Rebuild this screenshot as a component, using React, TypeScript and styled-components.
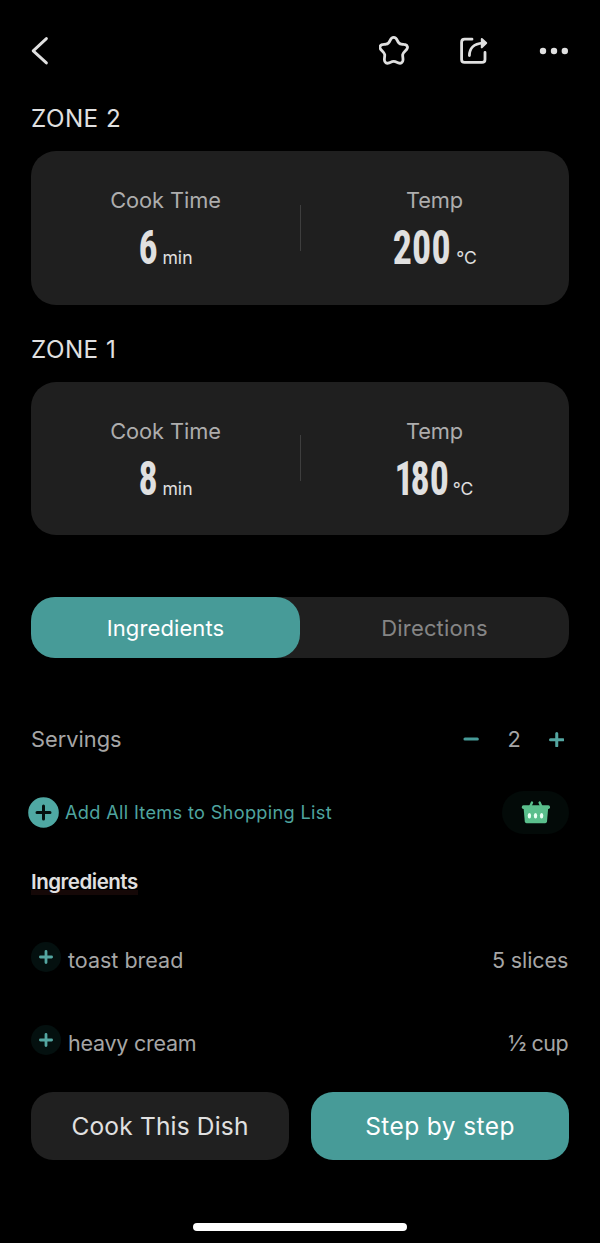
import React from 'react';
import styled, { createGlobalStyle } from 'styled-components';

const TEAL = '#479b98';
const PANEL = '#1f1f1f';
const LIGHT = '#e0e0e0';
const MUTED = '#a6a6a6';

const GlobalStyle = createGlobalStyle`
  * { box-sizing: border-box; }
  body { margin: 0; background: #000; }
  button { border: 0; padding: 0; background: none; font: inherit; color: inherit; }
`;

const Screen = styled.main`
  display: flex;
  flex-direction: column;
  width: 600px;
  height: 1243px;
  padding: 0 31px;
  overflow: hidden;
  background: #000;
  color: ${LIGHT};
  font-family: Inter, sans-serif;
  white-space: nowrap;
`;

const Header = styled.header`
  display: flex;
  flex: none;
  align-items: center;
  height: 102px;
  color: ${LIGHT};
`;

const HeaderActions = styled.div`
  display: flex;
  align-items: center;
  gap: 48px;
  margin-left: auto;
`;

const IconButton = styled.button`
  display: flex;
  flex: none;
`;

const ZoneTitle = styled.h2<{ $gap?: number }>`
  flex: none;
  margin: ${p => p.$gap ?? 0}px 0 16px;
  font-size: 24.2px;
  font-weight: 400;
  line-height: 33px;
  letter-spacing: 0.5px;
`;

const ZoneCard = styled.section`
  display: flex;
  flex: none;
  align-items: center;
  height: 153.5px;
  border-radius: 25px;
  background: ${PANEL};
`;

const Metric = styled.div`
  display: flex;
  flex-direction: column;
  align-items: center;
  align-self: stretch;
  width: 269px;
  padding-top: 35.4px;
`;

const MetricLabel = styled.span`
  font-size: 21.8px;
  line-height: 28px;
  letter-spacing: -0.08px;
  color: #adadad;
`;

const MetricReading = styled.div`
  display: flex;
  align-items: baseline;
  gap: 4px;
  margin-top: 16px;
`;

const MetricValue = styled.span<{ $width: number; $shift: number; $lead?: number }>`
  display: block;
  width: ${p => p.$width}px;
  text-indent: ${p => p.$shift}px;
  font-family: 'Roboto Condensed', Roboto, sans-serif;
  font-size: 48px;
  font-weight: 700;
  line-height: 36px;
  letter-spacing: 0.3px;
  transform: scaleX(0.79);
  transform-origin: left;

  &::first-letter { letter-spacing: ${p => p.$lead ?? 0.3}px; }
`;

const MetricUnit = styled.span<{ $size: number }>`
  font-size: ${p => p.$size}px;
  line-height: 20px;
`;

const CardDivider = styled.div`
  flex: none;
  width: 1px;
  height: 46px;
  margin-right: -1px;
  background: #3e3e3e;
`;

const Tabs = styled.div`
  display: flex;
  flex: none;
  height: 61.4px;
  margin-top: 62px;
  border-radius: 24px;
  background: ${PANEL};
`;

const Tab = styled.button<{ $active?: boolean }>`
  flex: 1;
  border-radius: 24px;
  background: ${p => (p.$active ? TEAL : 'transparent')};
  color: ${p => (p.$active ? '#fff' : '#858585')};
  font-size: 22px;
  letter-spacing: ${p => (p.$active ? 0.1 : 0.15)}px;
`;

const ServingsRow = styled.div`
  display: flex;
  flex: none;
  align-items: center;
  height: 40px;
  margin-top: 60.8px;
  font-size: 21.8px;
  color: ${MUTED};
`;

const Stepper = styled.div`
  display: flex;
  align-items: center;
  gap: 28px;
  margin-left: auto;
  padding-right: 4.7px;

  svg { margin-top: 0.6px; }
`;

const ShoppingRow = styled.div`
  display: flex;
  flex: none;
  align-items: center;
  height: 43px;
  margin: 31.6px 0 0 -3.5px;
`;

const AddAllButton = styled.button`
  display: flex;
  align-items: center;
  gap: 6.5px;
  color: #4fa49f;
  font-size: 18.2px;
  letter-spacing: 0.31px;
`;

const BasketPill = styled.button`
  display: flex;
  align-items: center;
  justify-content: center;
  width: 67.5px;
  height: 43px;
  margin-left: auto;
  padding-left: 1px;
  border-radius: 22px;
  background: #030a08;
`;

const ListTitle = styled.h3`
  flex: none;
  align-self: flex-start;
  margin: 33px 0 0;
  background: linear-gradient(#150807, #150807) 0 23px / 100% 5px no-repeat;
  font-size: 20.5px;
  font-weight: 600;
  line-height: 30px;
  letter-spacing: -0.48px;
`;

const IngredientRow = styled.div<{ $gap: number }>`
  display: flex;
  flex: none;
  height: 30px;
  margin-top: ${p => p.$gap}px;
  padding-right: 0.8px;
  font-size: 21.5px;
  line-height: 30px;
  color: ${MUTED};
`;

const AddBadge = styled.button`
  display: flex;
  flex: none;
  align-items: center;
  justify-content: center;
  width: 30px;
  height: 30px;
  margin: -3px 7px 0 0;
  border-radius: 50%;
  background: #04100f;
`;

const RowText = styled.span<{ $tracking: number; $end?: boolean }>`
  margin-left: ${p => (p.$end ? 'auto' : 0)};
  letter-spacing: ${p => p.$tracking}px;
`;

const ActionBar = styled.div`
  display: flex;
  flex: none;
  gap: 22px;
  height: 68px;
  margin-top: 33.9px;
`;

const ActionButton = styled.button<{ $primary?: boolean }>`
  flex: 1;
  padding-top: 0.4px;
  border-radius: 22px;
  background: ${p => (p.$primary ? TEAL : '#202020')};
  color: ${p => (p.$primary ? '#fff' : LIGHT)};
  font-size: 24.5px;
  letter-spacing: ${p => (p.$primary ? 0.4 : 0.18)}px;
`;

const HomeIndicator = styled.div`
  flex: none;
  align-self: center;
  width: 214px;
  height: 7.5px;
  margin-top: 63px;
  border-radius: 4px;
  background: #fff;
`;

const BackIcon = () => (
  <svg width="18" height="30" viewBox="31 36 18 30" fill="none" stroke="currentColor" strokeWidth="2.9" strokeLinecap="round" strokeLinejoin="round">
    <path d="M46.4 38.6 33.2 50.9l13.2 12" />
  </svg>
);

const StarIcon = () => (
  <svg width="32" height="32" viewBox="379 35 32 32" fill="none" stroke="currentColor" strokeWidth="2.8" strokeLinejoin="round">
    <path d="M393.7 37.4C395.6 37.4 396.6 38.8 397.4 40.6C398.4 42.9 399 43.8 401.3 44.1C403 44.4 404 44.3 405.2 44.6C407.6 45.3 408.2 47.6 406.6 49.5C405.2 51.1 403 52.8 402.7 54.6C402.5 56 403.1 58 403 60C402.9 62.6 400.8 63.9 398.4 62.9C396.8 62.2 395.5 61.3 393.7 61.3C391.9 61.3 390.6 62.2 389 62.9C386.6 63.9 384.5 62.6 384.4 60C384.3 58 384.9 56 384.7 54.6C384.4 52.8 382.2 51.1 380.8 49.5C379.2 47.6 379.8 45.3 382.2 44.6C383.4 44.3 384.4 44.4 386.1 44.1C388.4 43.8 389 42.9 390 40.6C390.8 38.8 391.8 37.4 393.7 37.4Z" />
  </svg>
);

const ShareIcon = () => (
  <svg width="32" height="32" viewBox="458.8 35 32 32" fill="none" stroke="currentColor" strokeWidth="2.8" strokeLinecap="round" strokeLinejoin="round">
    <path d="M471.8 39.2H464.4q-3 0-3 3V59.4q0 3 3 3h17.4q3 0 3-3V52.4" />
    <path d="M469.2 55.6C469.2 48.6 473.4 43.6 482.5 43.2" />
    <path d="M481.6 39 486 43.1 481.6 47.4Z" fill="currentColor" strokeWidth="2" />
  </svg>
);

const MoreIcon = () => (
  <svg width="30" height="8" viewBox="539 47 30 8" fill="currentColor">
    <circle cx="543" cy="51" r="3.2" />
    <circle cx="554" cy="51" r="3.2" />
    <circle cx="564.8" cy="51" r="3.2" />
  </svg>
);

const MinusIcon = () => (
  <svg width="16" height="16" viewBox="0.8 0 16 16" stroke={TEAL} strokeWidth="3.1" strokeLinecap="round" overflow="visible">
    <path d="M1.8 8h12.3" />
  </svg>
);

const PlusIcon = ({ size, weight }: { size: number; weight: number }) => (
  <svg width={size} height={size} viewBox={`0 0 ${size} ${size}`} stroke="#54a6a1" strokeWidth={weight} strokeLinecap="round">
    <path d={`M${weight / 2} ${size / 2}H${size - weight / 2}M${size / 2} ${weight / 2}V${size - weight / 2}`} />
  </svg>
);

const AddCircleIcon = () => (
  <svg width="31" height="31" viewBox="0 0 31 31">
    <circle cx="15.5" cy="15.5" r="15.3" fill="#4fa8a3" />
    <path d="M9 15.5h13M15.5 9v13" stroke="#04100f" strokeWidth="3" strokeLinecap="round" />
  </svg>
);

const BasketIcon = () => (
  <svg width="30" height="24" viewBox="521 800 30 24">
    <path d="M530.2 806.4 532 802.6M541.4 806.4 539.6 802.6" stroke="#5abf8c" strokeWidth="2.4" strokeLinecap="round" />
    <rect x="521.8" y="805.3" width="28.2" height="3.6" rx="1.6" fill="#5abf8c" />
    <path d="M523.6 808H548.2L547 821.4Q546.8 823.2 545.2 823.2H526.6Q525 823.2 524.8 821.4Z" fill="#5abf8c" />
    <g fill="#e9fff3">
      <ellipse cx="529.4" cy="815.7" rx="1.7" ry="2.8" />
      <ellipse cx="535.5" cy="815.7" rx="1.7" ry="2.8" />
      <ellipse cx="541.6" cy="815.7" rx="1.7" ry="2.8" />
    </g>
  </svg>
);

interface ZoneProps {
  minutes: string;
  temp: string;
  tempWidth: number;
  tempShift: number;
  tempLead?: number;
}

const Zone = ({ minutes, temp, tempWidth, tempShift, tempLead }: ZoneProps) => (
  <ZoneCard>
    <Metric>
      <MetricLabel>Cook Time</MetricLabel>
      <MetricReading>
        <MetricValue $width={20} $shift={0.5}>{minutes}</MetricValue>
        <MetricUnit $size={17.6}>min</MetricUnit>
      </MetricReading>
    </Metric>
    <CardDivider />
    <Metric>
      <MetricLabel>Temp</MetricLabel>
      <MetricReading>
        <MetricValue $width={tempWidth} $shift={tempShift} $lead={tempLead}>{temp}</MetricValue>
        <MetricUnit $size={17.5}>°C</MetricUnit>
      </MetricReading>
    </Metric>
  </ZoneCard>
);

export default function App() {
  return (
    <>
      <GlobalStyle />
      <Screen>
        <Header>
          <IconButton aria-label="Back"><BackIcon /></IconButton>
          <HeaderActions>
            <IconButton aria-label="Favourite"><StarIcon /></IconButton>
            <IconButton aria-label="Share"><ShareIcon /></IconButton>
            <IconButton aria-label="More"><MoreIcon /></IconButton>
          </HeaderActions>
        </Header>

        <ZoneTitle>ZONE 2</ZoneTitle>
        <Zone minutes="6" temp="200" tempWidth={60} tempShift={0.8} />
        <ZoneTitle $gap={28}>ZONE 1</ZoneTitle>
        <Zone minutes="8" temp="180" tempWidth={53} tempShift={-1.8} tempLead={-4.2} />

        <Tabs>
          <Tab $active>Ingredients</Tab>
          <Tab>Directions</Tab>
        </Tabs>

        <ServingsRow>
          Servings
          <Stepper>
            <IconButton aria-label="Fewer servings"><MinusIcon /></IconButton>
            <span>2</span>
            <IconButton aria-label="More servings"><PlusIcon size={15.5} weight={3} /></IconButton>
          </Stepper>
        </ServingsRow>

        <ShoppingRow>
          <AddAllButton>
            <AddCircleIcon />
            Add All Items to Shopping List
          </AddAllButton>
          <BasketPill aria-label="Shopping list"><BasketIcon /></BasketPill>
        </ShoppingRow>

        <ListTitle>Ingredients</ListTitle>
        <IngredientRow $gap={48.4}>
          <AddBadge aria-label="Add toast bread"><PlusIcon size={14} weight={2.8} /></AddBadge>
          <RowText $tracking={0}>toast bread</RowText>
          <RowText $tracking={-0.1} $end>5 slices</RowText>
        </IngredientRow>
        <IngredientRow $gap={53}>
          <AddBadge aria-label="Add heavy cream"><PlusIcon size={14} weight={2.8} /></AddBadge>
          <RowText $tracking={-0.25}>heavy cream</RowText>
          <RowText $tracking={-0.5} $end>½ cup</RowText>
        </IngredientRow>

        <ActionBar>
          <ActionButton>Cook This Dish</ActionButton>
          <ActionButton $primary>Step by step</ActionButton>
        </ActionBar>
        <HomeIndicator />
      </Screen>
    </>
  );
}
